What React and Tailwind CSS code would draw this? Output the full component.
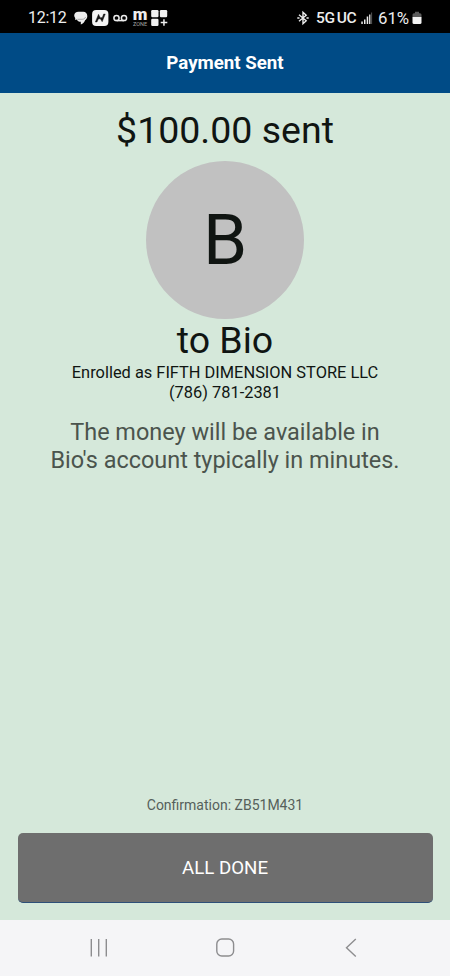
import React from "react";

function StatusBar() {
  return (
    <div className="h-[33px] shrink-0 bg-black text-[#ededed] flex items-center justify-between pl-[28px] pr-[28px] pt-[3px] whitespace-nowrap">
      <div className="flex items-center h-[18px]">
        <span className="w-[46px] text-[16px] leading-[18px] tracking-[-0.3px]">12:12</span>
        <svg width="14" height="16" viewBox="0 0 14 16" fill="currentColor" className="mr-[4px]">
          <path d="M4.500 1.800h4.800c2.400 0 4 1.800 4 4.200 0 2-.9 3.400-2.200 4.200-.6 1.900-1.900 3.200-4.300 4.300v-2.700c-2 0-3.300-.8-4-2.300L1.200 10V8.100C.5 7.400.2 6.500.2 5.600c0-2.300 1.800-3.800 4.300-3.800z" />
          <path d="M3.400 9.300h4.800c1.600 0 2.800-.8 3.400-2.300" stroke="#8a8a8a" strokeWidth=".7" fill="none" />
        </svg>
        <svg width="17" height="18" viewBox="0 0 17 18" className="mr-[4px]">
          <rect x=".1" y="1" width="16.300" height="16" rx="4" fill="#f4f4f4" />
          <path d="M3.300 13 6.500 5.200 8.300 8.700 10.300 8.500 11.600 5 13.300 5 10.200 12.800 8.300 9.800 6.400 9.900 5 13z" fill="#161616" stroke="#161616" strokeWidth=".4" />
        </svg>
        <svg width="15" height="16" viewBox="0 0 15 16" fill="none" stroke="currentColor" strokeWidth="1.500" className="mr-[5px]">
          <circle cx="3.500" cy="8" r="2.600" />
          <circle cx="11" cy="8" r="2.600" />
          <path d="M3.500 10.600H11" />
        </svg>
        <span className="w-[14px] h-[18px] mr-[4px] flex flex-col items-center">
          <span className="font-black text-[17px] leading-[10px] h-[12px]">m</span>
          <span className="text-[5.500px] leading-[6px] text-[#a5a5a5]">ZONE</span>
        </span>
        <svg width="17" height="18" viewBox="0 0 17 18" fill="#f0f0f0">
          <rect x=".2" y="1" width="7.300" height="7.300" rx="1.200" />
          <rect x="8.900" y="1" width="7.300" height="7.300" rx="1.200" />
          <rect x=".2" y="9.700" width="7.300" height="7.300" rx="1.200" />
          <path d="M12.200 10.300h1.500v2.400h2.600v1.500h-2.600v2.500h-1.500v-2.500H9.700v-1.500h2.500z" />
        </svg>
      </div>
      <div className="flex items-center h-[18px]">
        <svg width="12" height="16" viewBox="0 0 12 16" fill="none" stroke="currentColor" strokeWidth="1.400" className="mr-[7px]">
          <path d="M2 4.700 9.200 10.700 6 13.700V2.300l3.200 3L2 11.300" />
          <path d="M.3 8h2.200M9.500 8h2.200" strokeWidth="1.700" />
        </svg>
        <span className="w-[45px] text-[15.500px] leading-[18px] font-medium tracking-[-0.3px]">5G<span className="ml-[2px]">UC</span></span>
        <svg width="12" height="16" viewBox="0 0 12 16" fill="currentColor" className="mr-[5px]">
          <path d="M.3 11.500h1.500V14H.3zM3 9.500h1.500V14H3zM5.700 6.500h1.500V14H5.700zM8.100 4.500h1.300V14H8.100z" />
          <path d="M10.100 2.500h1V14h-1z" fill="#555" />
        </svg>
        <span className="w-[34px] text-[16.800px] leading-[18px]">61%</span>
        <svg width="10" height="16" viewBox="0 0 10 16">
          <path d="M3 1.800h4v1.500h1q1.500 0 1.500 1.500v2.500h-9V4.800q0-1.500 1.500-1.500h1z" fill="#5b5b5b" />
          <path d="M.5 7h9v5.500q0 1.500-1.500 1.500H2q-1.500 0-1.500-1.500z" fill="#f3f3f3" />
        </svg>
      </div>
    </div>
  );
}

function NavBar() {
  return (
    <div className="h-[56px] shrink-0 bg-[#f5f5f7] flex items-center justify-between pl-[89px] pr-[88px]">
      <svg width="20" height="20" viewBox="0 0 20 20" fill="none" stroke="#8d8d8f" strokeWidth="1.400">
        <path d="M2.300 1v17.500M9.700 1v17.500M17.300 1v17.500" />
      </svg>
      <svg width="20" height="20" viewBox="0 0 20 20" fill="none" stroke="#8d8d8f" strokeWidth="1.400">
        <rect x=".8" y="1" width="16.800" height="17" rx="5" />
      </svg>
      <svg width="20" height="20" viewBox="0 0 20 20" fill="none" stroke="#8d8d8f" strokeWidth="1.400">
        <path d="M13.800 1 4.500 9.700l9.300 8.800" />
      </svg>
    </div>
  );
}

export default function App() {
  return (
    <div className="w-full h-[976px] flex flex-col overflow-hidden bg-[#d5e8da] text-[#101512] font-['Roboto',sans-serif]">
      <StatusBar />
      <header className="h-[60px] shrink-0 bg-[#004b86] flex items-center justify-center">
        <h1 className="text-white font-bold text-[18.700px] leading-[24px]">Payment Sent</h1>
      </header>

      <main className="flex-1 flex flex-col items-center text-center pt-[15px] pb-[17px] px-[17.500px]">
        <div className="text-[37.500px] leading-[44px]">$100.00 sent</div>
        <div className="mt-[8.500px] w-[158px] h-[158px] shrink-0 rounded-full bg-[#c1c1c1] flex items-center justify-center text-[71px] leading-[84px]">
          B
        </div>
        <div className="-mt-[0.5px] text-[37.500px] leading-[44px]">to Bio</div>
        <div className="mt-px text-[16.400px] leading-[20px]">
          <p>Enrolled as FIFTH DIMENSION STORE LLC</p>
          <p>(786) 781-2381</p>
        </div>
        <p className="mt-[15px] text-[23.450px] leading-[28px] text-[#4b544d] whitespace-nowrap">
          The money will be available in
          <br />
          Bio's account typically in minutes.
        </p>

        <p className="mt-auto mb-[18px] text-[14px] leading-[20px] text-[#56605a]">Confirmation: ZB51M431</p>
        <button className="w-full h-[70px] shrink-0 rounded-[5px] bg-[#6e6e6e] border-b border-[#2d4f78] text-white text-[18.700px] leading-[24px]">
          ALL DONE
        </button>
      </main>
      <NavBar />
    </div>
  );
}
